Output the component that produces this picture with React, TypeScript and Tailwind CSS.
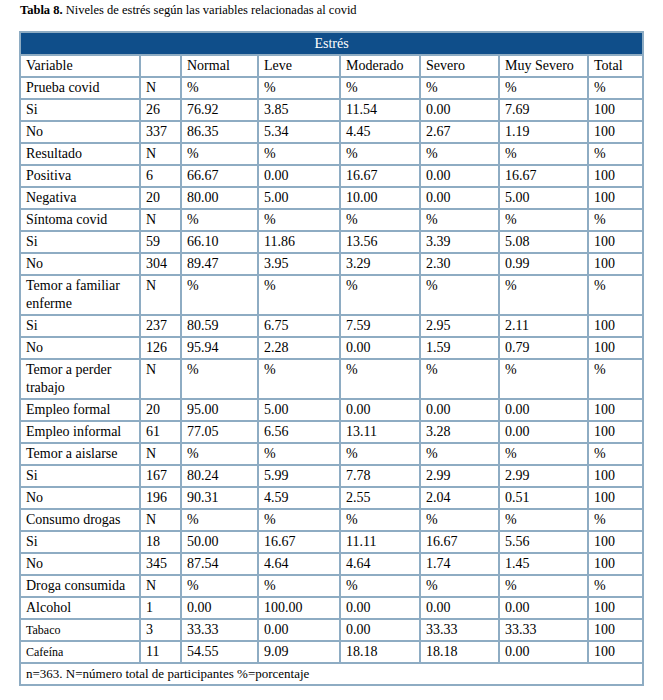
import React from 'react';

type Row = {
  label: string;
  n: string;
  values: string[];
  small?: boolean;
};

const pct = ['%', '%', '%', '%', '%', '%'];

// Datos de la tabla
const rows: Row[] = [
  { label: 'Prueba covid', n: 'N', values: pct },
  { label: 'Si', n: '26', values: ['76.92', '3.85', '11.54', '0.00', '7.69', '100'] },
  { label: 'No', n: '337', values: ['86.35', '5.34', '4.45', '2.67', '1.19', '100'] },
  { label: 'Resultado', n: 'N', values: pct },
  { label: 'Positiva', n: '6', values: ['66.67', '0.00', '16.67', '0.00', '16.67', '100'] },
  { label: 'Negativa', n: '20', values: ['80.00', '5.00', '10.00', '0.00', '5.00', '100'] },
  { label: 'Síntoma covid', n: 'N', values: pct },
  { label: 'Si', n: '59', values: ['66.10', '11.86', '13.56', '3.39', '5.08', '100'] },
  { label: 'No', n: '304', values: ['89.47', '3.95', '3.29', '2.30', '0.99', '100'] },
  { label: 'Temor a familiar enferme', n: 'N', values: pct },
  { label: 'Si', n: '237', values: ['80.59', '6.75', '7.59', '2.95', '2.11', '100'] },
  { label: 'No', n: '126', values: ['95.94', '2.28', '0.00', '1.59', '0.79', '100'] },
  { label: 'Temor a perder trabajo', n: 'N', values: pct },
  { label: 'Empleo formal', n: '20', values: ['95.00', '5.00', '0.00', '0.00', '0.00', '100'] },
  { label: 'Empleo informal', n: '61', values: ['77.05', '6.56', '13.11', '3.28', '0.00', '100'] },
  { label: 'Temor a aislarse', n: 'N', values: pct },
  { label: 'Si', n: '167', values: ['80.24', '5.99', '7.78', '2.99', '2.99', '100'] },
  { label: 'No', n: '196', values: ['90.31', '4.59', '2.55', '2.04', '0.51', '100'] },
  { label: 'Consumo drogas', n: 'N', values: pct },
  { label: 'Si', n: '18', values: ['50.00', '16.67', '11.11', '16.67', '5.56', '100'] },
  { label: 'No', n: '345', values: ['87.54', '4.64', '4.64', '1.74', '1.45', '100'] },
  { label: 'Droga consumida', n: 'N', values: pct },
  { label: 'Alcohol', n: '1', values: ['0.00', '100.00', '0.00', '0.00', '0.00', '100'] },
  { label: 'Tabaco', n: '3', values: ['33.33', '0.00', '0.00', '33.33', '33.33', '100'], small: true },
  { label: 'Cafeína', n: '11', values: ['54.55', '9.09', '18.18', '18.18', '0.00', '100'], small: true },
];

const cell = 'border-2 border-[#8eacc3] px-[5px] py-px align-top leading-[18px]';

const App: React.FC = () => {
  return (
    <div className="min-h-[700px] bg-white text-black font-[family-name:'Liberation_Serif',serif]">
      <div className="pl-[20px] pt-[3px] text-[12.5px] leading-[14px]">
        <span className="font-bold">Tabla 8.</span> Niveles de estrés según las variables relacionadas al covid
      </div>

      <table className="ml-[19px] mt-[14px] w-[623px] table-fixed border-collapse text-[14px]">
        <colgroup>
          <col className="w-[120px]" />
          <col className="w-[41px]" />
          <col className="w-[77px]" />
          <col className="w-[82px]" />
          <col className="w-[80px]" />
          <col className="w-[79px]" />
          <col className="w-[89px]" />
          <col className="w-[55px]" />
        </colgroup>
        <thead>
          <tr>
            <th
              colSpan={8}
              className="border-2 border-[#8eacc3] bg-[#0f4e8a] py-[1px] text-center font-normal leading-[19px] text-white"
            >
              Estrés
            </th>
          </tr>
          <tr>
            <td className={cell}>Variable</td>
            <td className={cell}></td>
            <td className={cell}>Normal</td>
            <td className={cell}>Leve</td>
            <td className={cell}>Moderado</td>
            <td className={cell}>Severo</td>
            <td className={cell}>Muy Severo</td>
            <td className={cell}>Total</td>
          </tr>
        </thead>
        <tbody>
          {rows.map((row, i) => (
            <tr key={i}>
              <td className={`${cell} ${row.small ? 'text-[12px]' : ''}`}>{row.label}</td>
              <td className={cell}>{row.n}</td>
              {row.values.map((v, j) => (
                <td key={j} className={cell}>
                  {v}
                </td>
              ))}
            </tr>
          ))}
          <tr>
            <td colSpan={8} className={`${cell} text-[13px]`}>
              n=363. N=número total de participantes %=porcentaje
            </td>
          </tr>
        </tbody>
      </table>
    </div>
  );
};

export default App;
